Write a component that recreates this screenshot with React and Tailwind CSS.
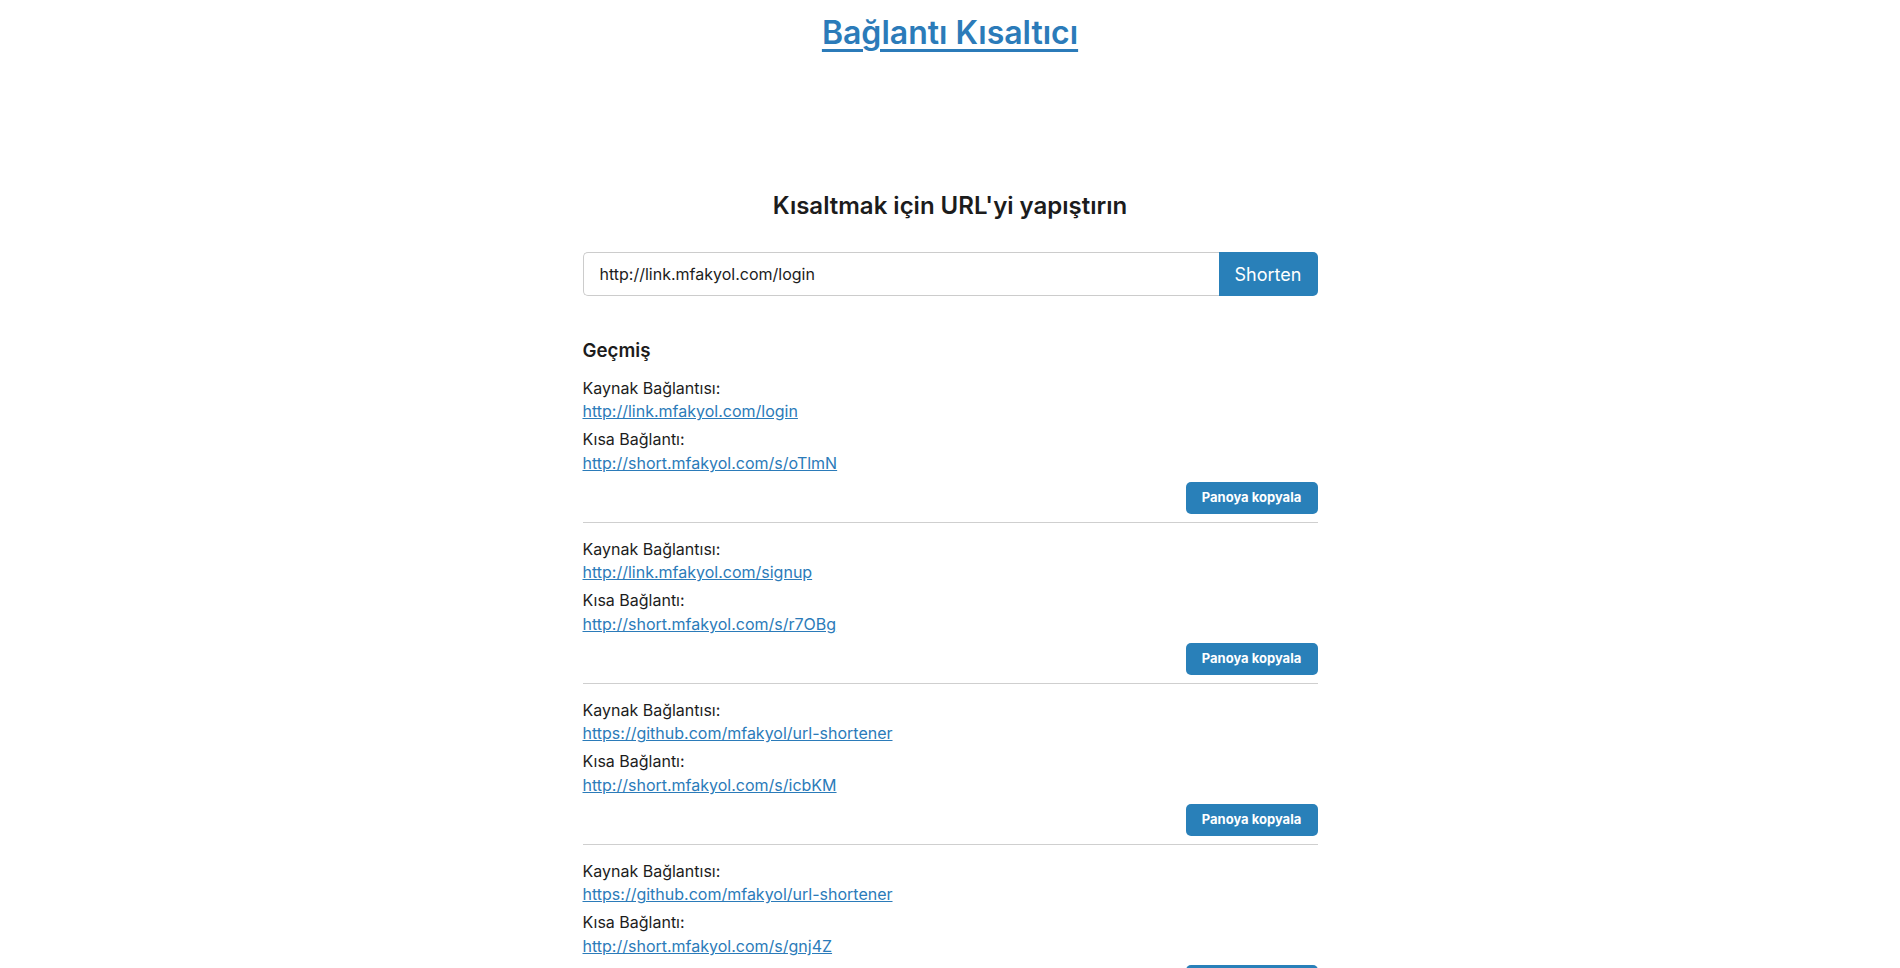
import { useState } from 'react'

const history = [
  { source: 'http://link.mfakyol.com/login', short: 'http://short.mfakyol.com/s/oTlmN' },
  { source: 'http://link.mfakyol.com/signup', short: 'http://short.mfakyol.com/s/r7OBg' },
  { source: 'https://github.com/mfakyol/url-shortener', short: 'http://short.mfakyol.com/s/icbKM' },
  { source: 'https://github.com/mfakyol/url-shortener', short: 'http://short.mfakyol.com/s/gnj4Z' },
]

function HistoryItem({ item, last }) {
  return (
    <div className={last ? 'pt-[14px]' : 'pt-[14px] pb-[8px] border-b border-[#cfcfcf]'}>
      <p className="text-[16px] leading-[24px]">Kaynak Bağlantısı:</p>
      <a href="#" className="block text-[16px] leading-[24px] text-[#2b7bb9] underline -mt-px">
        {item.source}
      </a>
      <p className="text-[16px] leading-[24px] mt-[4px]">Kısa Bağlantı:</p>
      <a href="#" className="block text-[16px] leading-[24px] text-[#2b7bb9] underline">
        {item.short}
      </a>
      <div className="flex justify-end mt-[7px]">
        <button className="h-[32px] w-[132px] rounded-[5px] bg-[#2980b9] text-white text-[13px] font-bold">
          Panoya kopyala
        </button>
      </div>
    </div>
  )
}

export default function App() {
  const [url, setUrl] = useState('http://link.mfakyol.com/login')

  return (
    <div className="min-h-screen bg-white text-[#1c1c1c] font-['Inter',sans-serif]">
      {/* Header */}
      <header className="pt-[14px] text-center">
        <a href="#" className="text-[32px] leading-[38px] font-semibold text-[#2b7bb9] underline decoration-[3px] underline-offset-[5px]">
          Bağlantı Kısaltıcı
        </a>
      </header>

      <main className="w-[735px] mx-auto">
        <h2 className="mt-[139px] text-center text-[24px] leading-[29px] font-semibold">
          Kısaltmak için URL'yi yapıştırın
        </h2>

        {/* Form */}
        <form className="flex mt-[32px] h-[44px]" onSubmit={(e) => e.preventDefault()}>
          <input
            value={url}
            onChange={(e) => setUrl(e.target.value)}
            className="flex-1 min-w-0 border border-[#cccccc] border-r-0 rounded-l-[5px] px-[16px] text-[16px] outline-none"
          />
          <button type="submit" className="w-[99px] rounded-r-[5px] bg-[#2980b9] text-white text-[18px]">
            Shorten
          </button>
        </form>

        {/* History */}
        <h3 className="mt-[44px] text-[18.7px] leading-[22px] font-semibold">Geçmiş</h3>
        <div>
          {history.map((item, i) => (
            <HistoryItem key={i} item={item} last={i === history.length - 1} />
          ))}
        </div>
      </main>
    </div>
  )
}
